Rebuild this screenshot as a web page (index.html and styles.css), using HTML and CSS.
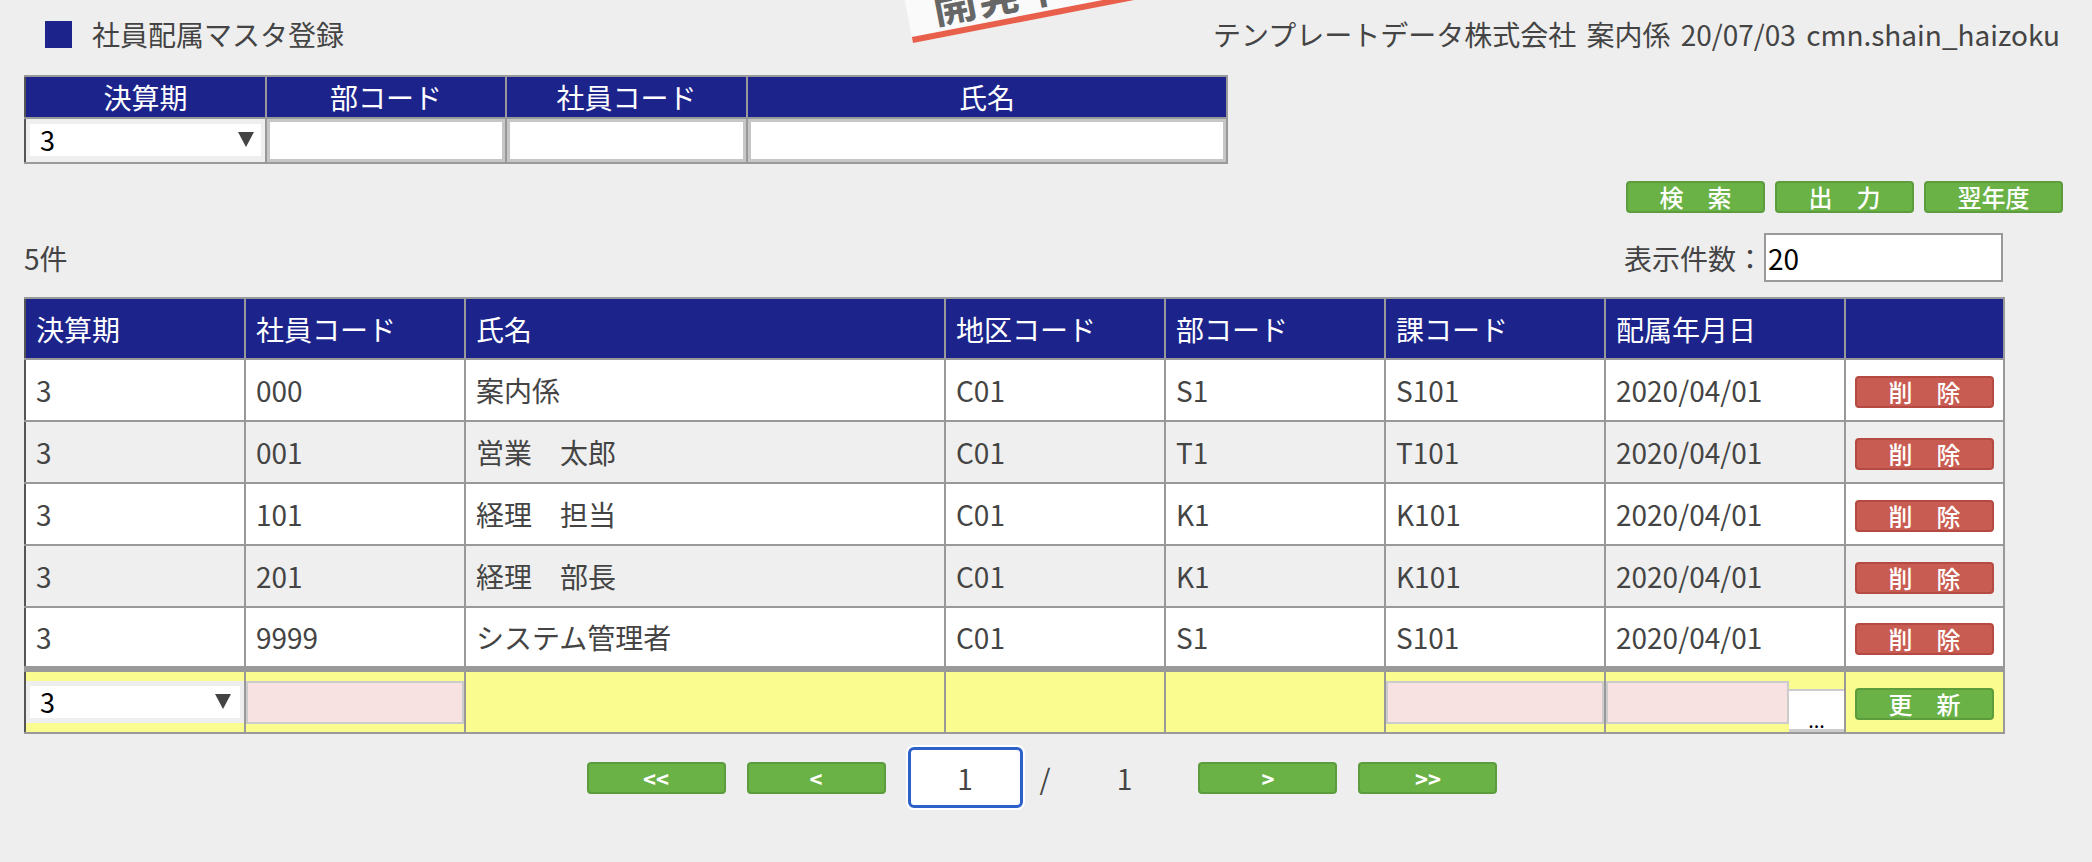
FILE: index.html
```html
<!DOCTYPE html>
<html lang="ja">
<head>
    <meta charset="UTF-8">
    <title>社員配属マスタ登録</title>
    <link rel="stylesheet" href="styles.css">
</head>
<body>
    <div class="stamp">開発中</div>

    <div class="header">
        <h1 class="title">社員配属マスタ登録</h1>
        <div class="info">テンプレートデータ株式会社 案内係 20/07/03 cmn.shain_haizoku</div>
    </div>

    <table class="search">
        <colgroup>
            <col style="width:241px"><col style="width:240px"><col style="width:241px"><col style="width:480px">
        </colgroup>
        <tr>
            <th>決算期</th>
            <th>部コード</th>
            <th>社員コード</th>
            <th>氏名</th>
        </tr>
        <tr>
            <td class="sel-cell"><span class="select"><select><option>3</option></select></span></td>
            <td><input type="text"></td>
            <td><input type="text"></td>
            <td><input type="text"></td>
        </tr>
    </table>

    <div class="actions">
        <button class="btn">検　索</button>
        <button class="btn">出　力</button>
        <button class="btn">翌年度</button>
    </div>

    <div class="count-row">
        <span>5件</span>
        <label>表示件数：<input class="per-page" type="text" value="20"></label>
    </div>

    <table class="list">
        <colgroup>
            <col style="width:220px"><col style="width:220px"><col style="width:480px"><col style="width:220px">
            <col style="width:220px"><col style="width:220px"><col style="width:240px"><col style="width:159px">
        </colgroup>
        <tr>
            <th>決算期</th>
            <th>社員コード</th>
            <th>氏名</th>
            <th>地区コード</th>
            <th>部コード</th>
            <th>課コード</th>
            <th>配属年月日</th>
            <th></th>
        </tr>
        <tr>
            <td>3</td><td>000</td><td>案内係</td><td>C01</td><td>S1</td><td>S101</td><td>2020/04/01</td>
            <td class="op"><button class="btn red">削　除</button></td>
        </tr>
        <tr class="alt">
            <td>3</td><td>001</td><td>営業　太郎</td><td>C01</td><td>T1</td><td>T101</td><td>2020/04/01</td>
            <td class="op"><button class="btn red">削　除</button></td>
        </tr>
        <tr>
            <td>3</td><td>101</td><td>経理　担当</td><td>C01</td><td>K1</td><td>K101</td><td>2020/04/01</td>
            <td class="op"><button class="btn red">削　除</button></td>
        </tr>
        <tr class="alt">
            <td>3</td><td>201</td><td>経理　部長</td><td>C01</td><td>K1</td><td>K101</td><td>2020/04/01</td>
            <td class="op"><button class="btn red">削　除</button></td>
        </tr>
        <tr>
            <td>3</td><td>9999</td><td>システム管理者</td><td>C01</td><td>S1</td><td>S101</td><td>2020/04/01</td>
            <td class="op"><button class="btn red">削　除</button></td>
        </tr>
        <tr class="new">
            <td><span class="select"><select><option>3</option></select></span></td>
            <td><input class="req" type="text"></td>
            <td></td>
            <td></td>
            <td></td>
            <td><input class="req" type="text"></td>
            <td>
                <div class="date-field">
                    <input class="req" type="text">
                    <button class="dots">...</button>
                </div>
            </td>
            <td class="op"><button class="btn">更　新</button></td>
        </tr>
    </table>

    <div class="pager">
        <button class="btn pg">&lt;&lt;</button>
        <button class="btn pg">&lt;</button>
        <input class="page-input" type="text" value="1">
        <span class="slash">/</span>
        <span class="total">1</span>
        <button class="btn pg">&gt;</button>
        <button class="btn pg">&gt;&gt;</button>
    </div>
</body>
</html>
```

FILE: styles.css
```css
* {
    box-sizing: border-box;
}

body {
    margin: 0;
    background: #eeeeee;
    font-family: "Noto Sans CJK JP", "Noto Sans", sans-serif;
    font-size: 28px;
    color: #444;
    position: relative;
    overflow: hidden;
}

/* 開発中スタンプ */
.stamp {
    position: absolute;
    left: 913px;
    top: -47px;
    width: 380px;
    height: 90px;
    background: #fafafa;
    border-bottom: 6px solid #e8604c;
    transform: rotate(-11deg);
    transform-origin: left bottom;
    display: flex;
    align-items: flex-end;
    padding: 0 0 5px 26px;
    font-size: 44px;
    font-weight: bold;
    line-height: 1;
    color: #666;
    z-index: 2;
}

.header {
    display: flex;
    justify-content: space-between;
    align-items: center;
    height: 68px;
    padding: 0 32px 0 45px;
}

.title {
    margin: 0;
    display: flex;
    align-items: center;
    font-size: 28px;
    font-weight: normal;
}

.title::before {
    content: "";
    width: 27px;
    height: 27px;
    background: #1c248c;
    margin-right: 20px;
}

.info {
    word-spacing: 4px;
}

/* 検索条件 */
.search {
    margin: 7px 0 0 24px;
    width: 1202px;
    border-collapse: collapse;
    table-layout: fixed;
}

.search th,
.search td {
    border: 2px solid #999;
    padding: 0;
}

.search tr > :first-child { border-left-color: #555; }

.search th {
    height: 40px;
    background: #1c248c;
    color: #fff;
    font-weight: normal;
    text-align: center;
}

.search td {
    height: 45px;
    background: #eee;
}

.search input {
    display: block;
    width: 100%;
    height: 43px;
    margin: 0;
    border: 3px solid #c6c6c6;
    background: #fff;
}

.search .sel-cell {
    padding: 5px 4px 6px;
}

.select {
    display: block;
    position: relative;
}

.select::after {
    content: "";
    position: absolute;
    right: 7px;
    top: 8px;
    border-left: 8px solid transparent;
    border-right: 8px solid transparent;
    border-top: 15px solid #444;
    pointer-events: none;
}

.select select {
    appearance: none;
    display: block;
    width: 100%;
    height: 32px;
    margin: 0;
    border: 0;
    border-radius: 0;
    background: #fff;
    padding: 0 0 0 10px;
    font-family: inherit;
    font-size: 27px;
    line-height: 32px;
    color: #000;
}

/* ボタン */
.btn {
    width: 139px;
    height: 32px;
    padding: 0;
    border: 2px solid #5c9c3c;
    border-radius: 4px;
    background: #6ab246;
    color: #fff;
    font-family: inherit;
    font-size: 24px;
    font-weight: 500;
    line-height: 26px;
}

.btn.red {
    background: #c95c52;
    border-color: #b44a41;
}

.actions {
    display: flex;
    justify-content: flex-end;
    gap: 10px;
    margin-top: 17px;
    padding-right: 29px;
}

.count-row {
    display: flex;
    justify-content: space-between;
    align-items: center;
    width: 1979px;
    height: 49px;
    margin: 20px 0 0 24px;
}

.count-row label {
    display: flex;
    align-items: center;
}

.per-page {
    width: 239px;
    height: 49px;
    border: 2px solid #999;
    background: #fff;
    padding: 0 2px;
    font-family: inherit;
    font-size: 28px;
    color: #000;
}

/* 一覧 */
.list {
    margin: 15px 0 0 24px;
    width: 1979px;
    border-collapse: collapse;
    table-layout: fixed;
}

.list th,
.list td {
    border: 2px solid #999;
    padding: 0 10px;
    text-align: left;
}

.list tr > :first-child { border-left-color: #555; }

.list th {
    height: 61px;
    background: #1c248c;
    color: #fff;
    font-weight: normal;
}

.list td {
    height: 62px;
    background: #fff;
    white-space: nowrap;
}

.list tr.alt td { background: #efefef; }

.list td.op {
    padding: 0;
    text-align: center;
}

.list tr.new td {
    height: 64px;
    background: #fbfc8f;
    border-top: 6px solid #999;
    padding: 0;
}

.list tr.new .select {
    border: 5px solid #eee;
    border-left-width: 4px;
    border-right-width: 4px;
}

.list tr.new .select::after {
    top: 8px;
    right: 9px;
}

.req {
    display: block;
    width: 100%;
    height: 43px;
    margin: 0;
    border: 2px solid #cccccc;
    background: #f7e1e1;
}

.date-field {
    display: flex;
    align-items: center;
    height: 59px;
}

.date-field .req {
    width: 183px;
    flex: none;
}

.dots {
    align-self: flex-end;
    width: 56px;
    height: 43px;
    padding: 14px 0 0;
    border: 0;
    border-top: 2px solid #ccc;
    border-bottom: 3px solid #ccc;
    background: #fff;
    font-family: inherit;
    font-size: 20px;
    color: #000;
}

/* ページ送り */
.pager {
    display: flex;
    justify-content: center;
    align-items: center;
    height: 65px;
    margin-top: 11px;
    padding-right: 8px;
}

.pg {
    font-size: 22px;
    font-weight: bold;
    line-height: 26px;
}

.pg + .pg { margin-left: 21px; }

.page-input {
    width: 115px;
    height: 61px;
    margin-left: 22px;
    border: 3px solid #2d60c8;
    border-radius: 6px;
    box-shadow: 0 0 0 2px #fff;
    background: #fff;
    text-align: center;
    font-family: inherit;
    font-size: 28px;
    color: #444;
    outline: none;
}

.slash {
    margin-left: 17px;
}

.total {
    width: 148px;
    text-align: center;
}
```
